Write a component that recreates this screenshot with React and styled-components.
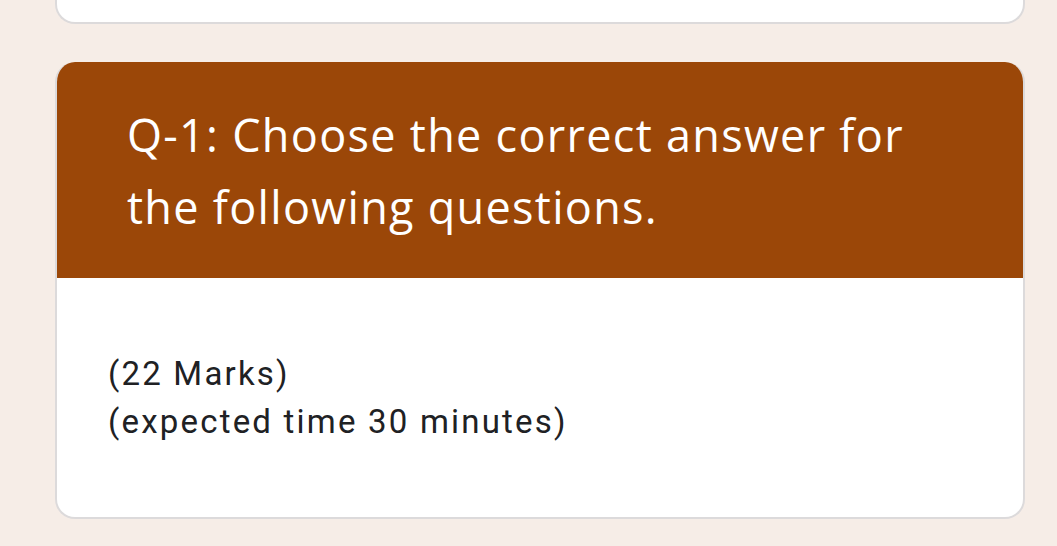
import React from 'react'
import styled, { createGlobalStyle } from 'styled-components'

const GlobalStyle = createGlobalStyle`
  body {
    margin: 0;
    background-color: #f6ede7;
  }
`

const Page = styled.div`
  display: flex;
  flex-direction: column;
  gap: 38px;
  padding: 0 32px 0 55px;
  width: 970px;
`

const PrevCard = styled.div`
  height: 22px;
  background-color: #fff;
  border: 2px solid #dcdadb;
  border-top: none;
  border-radius: 0 0 20px 20px;
`

const Card = styled.div`
  background-color: #fff;
  border: 2px solid #dcdadb;
  border-top: none;
  border-radius: 20px;
  overflow: hidden;
`

const Header = styled.div`
  background-color: #9b4708;
  margin: 0 -2px;
  padding: 37px 72px 35px 72px;
  height: 144px;
`

const Title = styled.h2`
  margin: 0;
  font-family: 'Open Sans', sans-serif;
  font-weight: 400;
  font-size: 45px;
  letter-spacing: 1.3px;
  line-height: 72px;
  color: #fff;
`

const Body = styled.div`
  padding: 72px 51px 71px 51px;
`

const Line = styled.p`
  margin: 0;
  font-family: Roboto, sans-serif;
  font-size: 33px;
  letter-spacing: 2.2px;
  line-height: 48px;
  color: #202124;
`

const App = () => (
  <>
    <GlobalStyle />
    <Page>
      <PrevCard />
      <Card>
        <Header>
          <Title>
            Q-1: Choose the correct answer for
            <br />
            the following questions.
          </Title>
        </Header>
        <Body>
          <Line>(22 Marks)</Line>
          <Line>(expected time 30 minutes)</Line>
        </Body>
      </Card>
    </Page>
  </>
)

export default App
